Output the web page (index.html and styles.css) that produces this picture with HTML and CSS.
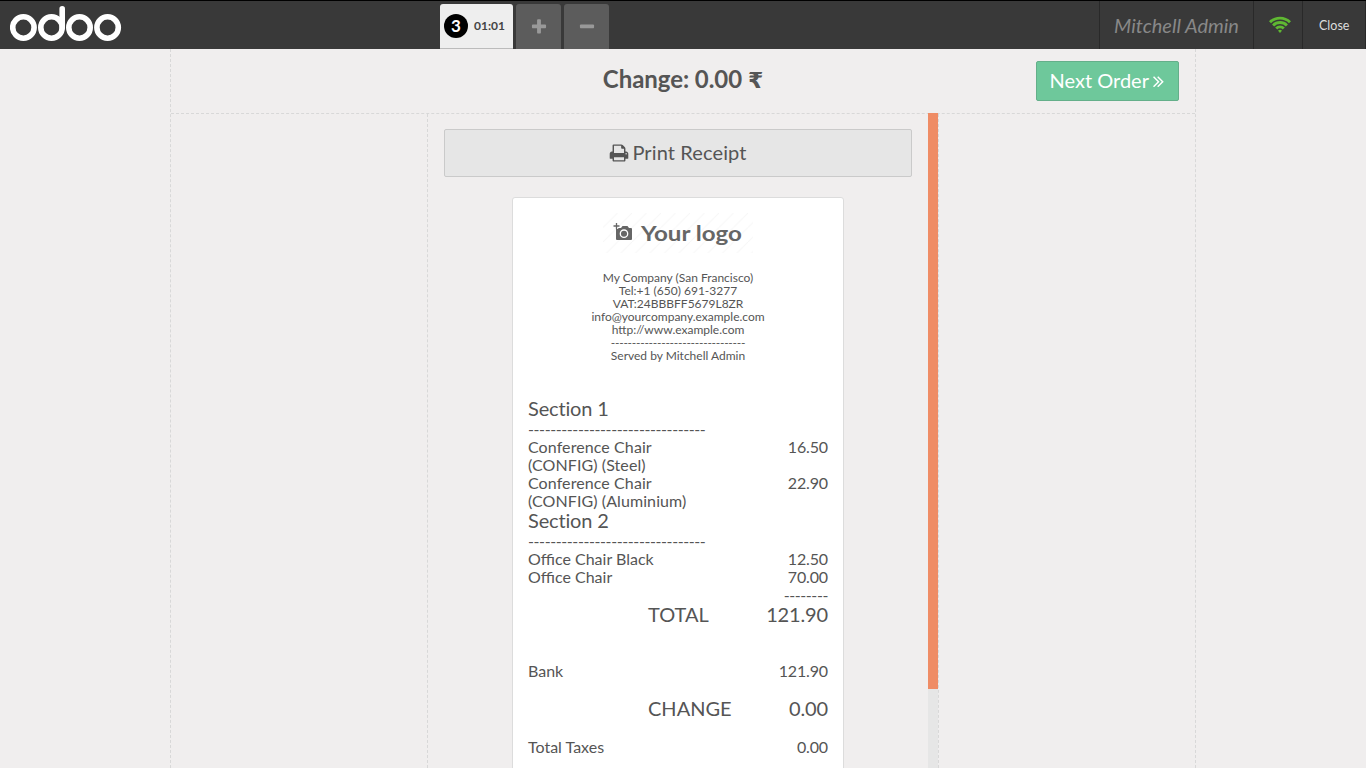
FILE: index.html
```html
<!DOCTYPE html>
<html lang="en">
<head>
<meta charset="utf-8">
<title>Odoo POS</title>
<link rel="stylesheet" href="styles.css">
</head>
<body>
<div class="pos">
  <header class="topbar">
    <div class="branding">
      <svg class="logo" width="112" height="36" viewBox="0 0 112 36" role="img" aria-label="odoo">
        <g fill="none" stroke="#fff" stroke-width="5.6">
          <circle cx="13.4" cy="21.5" r="10.7"/>
          <circle cx="41.5" cy="21.5" r="10.7"/>
          <circle cx="69.5" cy="21.5" r="10.7"/>
          <circle cx="97.6" cy="21.5" r="10.7"/>
          <path d="M52.2 2.8V21.5" stroke-linecap="round"/>
        </g>
      </svg>
    </div>
    <nav class="orders">
      <div class="tab active"><span class="num">3</span><span class="time">01:01</span></div>
      <div class="tab small"><svg width="18" height="18" viewBox="0 0 1792 1792" fill="currentColor"><path d="M1600 736v192q0 40-28 68t-68 28h-416v416q0 40-28 68t-68 28h-192q-40 0-68-28t-28-68v-416h-416q-40 0-68-28t-28-68v-192q0-40 28-68t68-28h416v-416q0-40 28-68t68-28h192q40 0 68 28t28 68v416h416q40 0 68 28t28 68z"/></svg></div>
      <div class="tab small"><svg width="18" height="18" viewBox="0 0 1792 1792" fill="currentColor"><path d="M1600 736v192q0 40-28 68t-68 28h-1216q-40 0-68-28t-28-68v-192q0-40 28-68t68-28h1216q40 0 68 28t28 68z"/></svg></div>
    </nav>
    <div class="status">
      <div class="user">Mitchell Admin</div>
      <div class="wifi">
        <svg width="22" height="17" viewBox="0 0 22 17"><g fill="none" stroke="#5fb832" stroke-width="2.9"><path d="M1 6.200a14.200 14.200 0 0 1 20 0"/><path d="M4.100 9.400a9.700 9.700 0 0 1 13.800 0"/><path d="M7.200 12.500a5.300 5.300 0 0 1 7.600 0"/></g><path d="M11 16.900l-2-2.100a2.900 2.900 0 0 1 4 0z" fill="#5fb832"/></svg>
      </div>
      <div class="close">Close</div>
    </div>
  </header>
  <main class="screen">
    <div class="title-row">
      <h1>Change: 0.00 <span class="currency">₹</span></h1>
      <button class="next"><span>Next Order</span><svg width="20" height="20" viewBox="0 0 1152 1792" fill="currentColor"><path d="M595 960q0 13-10 23l-466 466q-10 10-23 10t-23-10l-50-50q-10-10-10-23t10-23l393-393-393-393q-10-10-10-23t10-23l50-50q10-10 23-10t23 10l466 466q10 10 10 23zm384 0q0 13-10 23l-466 466q-10 10-23 10t-23-10l-50-50q-10-10-10-23t10-23l393-393-393-393q-10-10-10-23t10-23l50-50q10-10 23-10t23 10l466 466q10 10 10 23z"/></svg></button>
    </div>
    <div class="columns">
      <div class="side left"></div>
      <div class="center">
        <div class="scroller">
          <button class="print"><svg width="20" height="20" viewBox="0 0 1792 1792" fill="currentColor"><path d="M448 1536h896v-256h-896v256zm0-640h896v-384h-160q-40 0-68-28t-28-68v-160h-640v640zm1152 64q0-26-19-45t-45-19-45 19-19 45 19 45 45 19 45-19 19-45zm128 0v416q0 13-9.5 22.5t-22.5 9.5h-224v160q0 40-28 68t-68 28h-960q-40 0-68-28t-28-68v-160h-224q-13 0-22.5-9.5t-9.5-22.5v-416q0-79 56.5-135.5t135.5-56.5h64v-544q0-40 28-68t68-28h672q40 0 88 20t76 48l152 152q28 28 48 76t20 88v256h64q79 0 135.5 56.5t56.5 135.5z"/></svg><span>Print Receipt</span></button>
          <section class="receipt">
            <svg class="company-logo" width="150" height="40" viewBox="0 0 150 40">
              <defs><pattern id="hatch" width="14.5" height="14.5" patternUnits="userSpaceOnUse"><path d="M-1 15.5L15.5-1" stroke="#f7f7f7" stroke-width="1"/></pattern></defs>
              <rect width="150" height="40" fill="url(#hatch)"/>
              <g fill="#666">
                <path d="M14 15h4l1.500-2h5l1.500 2h2q1 0 1 1v10q0 1-1 1H14q-1 0-1-1V16q0-1 1-1z"/>
                <circle cx="21" cy="20.700" r="3.700" fill="none" stroke="#fff" stroke-width="1.300"/>
                <path d="M13.500 10v6M10.500 13h6" fill="none" stroke="#fff" stroke-width="3.500"/>
                <path d="M13.500 10v6M10.500 13h6" fill="none" stroke="#666" stroke-width="1.300"/>
                <text x="38" y="28" textLength="101" lengthAdjust="spacingAndGlyphs" class="logo-text">Your logo</text>
              </g>
            </svg>
            <div class="contact">
              <div>My Company (San Francisco)</div>
              <div>Tel:+1 (650) 691-3277</div>
              <div>VAT:24BBBFF5679L8ZR</div>
              <div>info@yourcompany.example.com</div>
              <div>http://www.example.com</div>
              <div class="rule">--------------------------------</div>
              <div>Served by Mitchell Admin</div>
            </div>
            <div class="lines">
              <div class="big section">Section 1</div>
              <div class="rule">--------------------------------</div>
              <div class="row"><span class="name config">Conference Chair (CONFIG) (Steel)</span><span>16.50</span></div>
              <div class="row"><span class="name config">Conference Chair (CONFIG) (Aluminium)</span><span>22.90</span></div>
              <div class="big section">Section 2</div>
              <div class="rule">--------------------------------</div>
              <div class="row"><span class="name">Office Chair Black</span><span>12.50</span></div>
              <div class="row"><span class="name">Office Chair</span><span>70.00</span></div>
              <div class="right rule">--------</div>
              <div class="row big indent"><span>TOTAL</span><span>121.90</span></div>
            </div>
            <div class="row bank"><span>Bank</span><span>121.90</span></div>
            <div class="row big indent change"><span>CHANGE</span><span>0.00</span></div>
            <div class="row"><span>Total Taxes</span><span>0.00</span></div>
          </section>
        </div>
        <div class="track"><div class="thumb"></div></div>
      </div>
      <div class="side right-side"></div>
    </div>
  </main>
</div>
</body>
</html>
```
FILE: styles.css
```css
* { box-sizing: border-box; }
body { margin: 0; overflow: hidden; font-family: Lato, "Liberation Sans", sans-serif; color: #555; background: #f0eeee; }
button { font-family: inherit; }
svg { display: block; flex: none; }
.pos { height: 768px; display: flex; flex-direction: column; overflow: hidden; }
.topbar { height: 49px; flex: none; display: flex; background: #393939; border-top: 1px solid #000; }
.branding { width: 440px; padding: 5px 0 0 10px; }
.orders { flex: 1; display: flex; gap: 3px; padding-top: 3px; }
.tab { border-radius: 3px 3px 0 0; height: 45px; display: flex; align-items: center; }
.active { width: 73px; background: #eee; border-bottom: 1px solid #bbb; padding-left: 4px; gap: 6px; }
.num { width: 24px; height: 24px; border-radius: 50%; background: #000; color: #fff; font-weight: 700; font-size: 17px; line-height: 24px; text-align: center; }
.time { font-weight: 700; font-size: 12px; color: #444; padding-bottom: 2px; }
.small { width: 45px; justify-content: center; background: #5c5c5c; color: #999; }
.status { display: flex; }
.user { border-left: 1px solid #292929; width: 154px; text-align: center; font-size: 20px; font-style: italic; color: #888; line-height: 48px; }
.wifi { border-left: 1px solid #292929; width: 49px; padding: 15px 0 0 15px; }
.close { border-left: 1px solid #292929; border-right: 1px solid #292929; width: 64px; padding-left: 16px; font-size: 12.5px; color: #ddd; line-height: 49px; }
.screen { width: 1026px; margin-left: 170px; flex: 1; min-height: 0; display: flex; flex-direction: column; border: dashed #d8d8d8; border-width: 0 1px; }
.title-row { height: 65px; flex: none; border-bottom: 1px dashed #d8d8d8; display: grid; grid-template-columns: 1fr auto 1fr; align-items: start; padding: 12px 16px 0; }
h1 { grid-column: 2; margin: 0; font-size: 24px; line-height: 36px; font-weight: 700; letter-spacing: -0.05px; }
.currency { font-family: "DejaVu Sans", sans-serif; font-size: 22px; line-height: 1; }
.next { justify-self: end; width: 143px; height: 40px; padding: 0; border: 1px solid #64af8a; border-radius: 2px; background: #6ec89b; color: #fff; font-size: 20px; display: flex; align-items: center; justify-content: center; gap: 4px; }
.next span, .print span { padding-bottom: 2px; }
.next svg { width: 12.5px; }
.columns { flex: 1; min-height: 0; display: flex; }
.side { width: 257px; }
.left { border-right: 1px dashed #d8d8d8; }
.right-side { border-left: 1px dashed #d8d8d8; }
.center { width: 510px; display: flex; }
.scroller { width: 500px; padding: 15px 16px 0; overflow: hidden; }
.print { width: 468px; height: 48px; display: flex; align-items: center; justify-content: center; gap: 3px; border: 1px solid #cacaca; border-radius: 2px; background: #e6e6e6; color: #555; font-size: 20px; padding: 0; }
.print span { letter-spacing: 0.12px; }
.track { width: 10px; margin-top: -1px; background: #e6e6e6; }
.thumb { height: 576px; background: #ef8c65; }
.receipt { width: 332px; height: 800px; margin: 20px auto 0; padding: 15px; background: #fff; border: 1px solid #dcdcdc; border-radius: 3px; font-size: 16px; line-height: 18px; }
.company-logo { margin: 0 auto; }
.logo-text { font-size: 21.5px; font-weight: 700; }
.contact { margin-top: 18px; font-size: 12px; line-height: 13px; text-align: center; }
.lines { margin-top: 36px; }
.rule { letter-spacing: -0.4px; }
.contact .rule { letter-spacing: -0.26px; }
.row { display: flex; justify-content: space-between; }
.row span:last-child { letter-spacing: -0.15px; }
.name { width: 180px; }
.config { letter-spacing: 0.09px; }
.big { font-size: 20px; line-height: 20px; padding-bottom: 2px; }
.section { letter-spacing: -0.15px; }
.indent { padding-left: 120px; }
.right { text-align: right; }
.bank { margin-top: 36px; }
.change { margin: 18px 0; }
```
